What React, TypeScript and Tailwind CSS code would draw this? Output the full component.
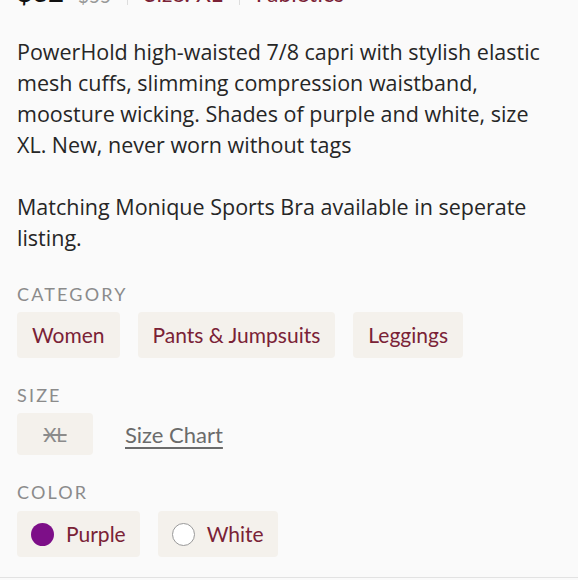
import React from "react";

const font = { fontFamily: "Lato, 'Open Sans', sans-serif" };

function Chip({ children, className = "" }: { children: React.ReactNode; className?: string }) {
  return (
    <div className={`flex h-[46px] items-center rounded-[4px] bg-[#f4f1ec] text-[21px] text-[#7a2236] ${className}`}>
      {children}
    </div>
  );
}

export default function App() {
  return (
    <div className="h-[580px] w-[578px] overflow-hidden bg-[#fafafa] text-[#222]" style={font}>
      <div className="mt-[-22px] flex h-[27px] items-end px-[17px] leading-none">
        <span className="text-[27px] font-bold text-[#111]">$32</span>
        <span className="ml-[14px] text-[19px] text-[#999] line-through">$55</span>
        <span className="ml-[16px] mr-[16px] h-[27px] w-px bg-[#ddd]" />
        <span className="text-[23px] text-[#7a2236]">Size: XL</span>
        <span className="mx-[16px] h-[27px] w-px bg-[#ddd]" />
        <span className="text-[23px] text-[#7a2236]">Fabletics</span>
      </div>

      <div
        className="mt-[31px] px-[17px] text-[21.5px] leading-[31px] text-[#262626]"
        style={{ fontFamily: "'Open Sans', Lato, sans-serif" }}
      >
        <p className="whitespace-nowrap">
          PowerHold high-waisted 7/8 capri with stylish elastic
          <br />
          mesh cuffs, slimming compression waistband,
          <br />
          moosture wicking. Shades of purple and white, size
          <br />
          XL. New, never worn without tags
        </p>
        <p className="mt-[31px] whitespace-nowrap">
          Matching Monique Sports Bra available in seperate
          <br />
          listing.
        </p>
      </div>

      <div className="mt-[30px] px-[17px]">
        <div className="text-[18px] uppercase leading-[22px] tracking-[0.12em] text-[#8b8b8b]">Category</div>
        <div className="mt-[7px] flex gap-[18px]">
          <Chip className="px-[15px]">Women</Chip>
          <Chip className="px-[15px]">Pants &amp; Jumpsuits</Chip>
          <Chip className="px-[15px]">Leggings</Chip>
        </div>

        <div className="mt-[26px] text-[18px] uppercase leading-[22px] tracking-[0.12em] text-[#8b8b8b]">Size</div>
        <div className="mt-[7px] flex items-center gap-[32px]">
          <div className="flex h-[42px] w-[76px] items-center justify-center rounded-[4px] bg-[#f4f1ec] text-[20px] text-[#8b8b8b] line-through">
            XL
          </div>
          <span className="text-[22px] text-[#6b6b6b] underline underline-offset-[4px]">Size Chart</span>
        </div>

        <div className="mt-[26px] text-[18px] uppercase leading-[22px] tracking-[0.12em] text-[#8b8b8b]">Color</div>
        <div className="mt-[8px] flex gap-[18px]">
          <Chip className="gap-[12px] pl-[14px] pr-[14px]">
            <span className="h-[23px] w-[23px] rounded-full bg-[#7d0f88]" />
            Purple
          </Chip>
          <Chip className="gap-[12px] pl-[14px] pr-[14px]">
            <span className="h-[23px] w-[23px] rounded-full border border-[#999] bg-white" />
            White
          </Chip>
        </div>
      </div>
      <div className="mt-[20px] h-px w-full bg-[#e2e2e2]" />
    </div>
  );
}
